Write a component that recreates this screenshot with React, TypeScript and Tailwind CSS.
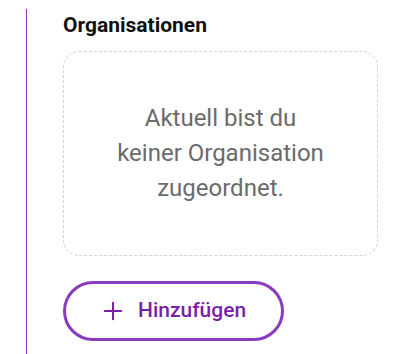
import { Plus } from "lucide-react";

export default function App() {
  return (
    <div className="h-[354px] bg-white pt-[9px] font-['Roboto',sans-serif]">
      <div className="ml-[26px] h-full border-l border-[#8a3cc0] pl-[36px] pr-[18px]">
        <h2 className="pt-[2px] text-[21px] leading-[28px] font-bold text-[#111]">
          Organisationen
        </h2>

        <div className="mt-[12px] flex h-[205px] items-center justify-center rounded-[16px] border border-dashed border-[#d4d4d4]">
          <p className="w-[210px] text-center text-[24px] leading-[35px] text-[#6b6b6b]">
            Aktuell bist du keiner Organisation zugeordnet.
          </p>
        </div>

        <button className="mt-[25px] flex h-[60px] w-[221px] items-center gap-[11px] rounded-full border-[3px] border-[#8a3cc0] pl-[33px] text-[21px] font-medium text-[#7a1fa8]">
          <Plus size={28} strokeWidth={1.7} />
          Hinzufügen
        </button>
      </div>
    </div>
  );
}
